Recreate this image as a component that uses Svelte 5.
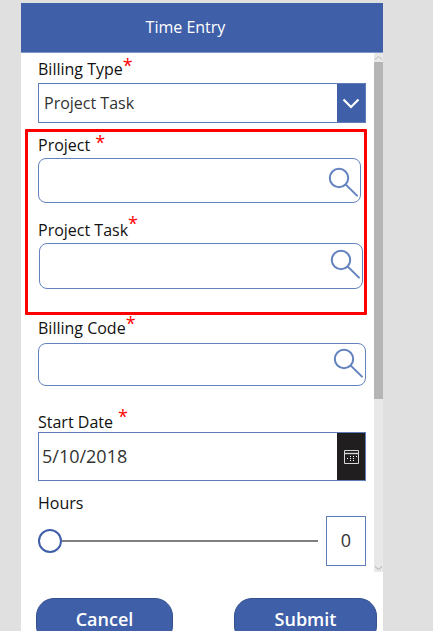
<script lang="ts">
  let hours = 0
  let startDate = '5/10/2018'
</script>

{#snippet searchIcon()}
  <svg class="search-icon" width="32" height="32" viewBox="0 0 32 32" aria-hidden="true">
    <circle cx="12" cy="12" r="9.2" fill="none" stroke="#6383bf" stroke-width="2" />
    <path d="M18.8 18.6 L30 29.6" fill="none" stroke="#6383bf" stroke-width="2" stroke-linecap="round" />
  </svg>
{/snippet}

{#snippet star()}<span class="star">*</span>{/snippet}

<div class="screen">
  <header class="title-bar">Time Entry</header>

  <div class="scroll-area">
    <form class="form">
      <div class="field">
        <div class="label label-type">Billing Type{@render star()}</div>
        <div class="select">
          <span class="select-value">Project Task</span>
          <span class="select-btn">
            <svg width="18" height="11" viewBox="0 0 18 11" aria-hidden="true">
              <path d="M1.5 1.5 L9 9 L16.5 1.5" fill="none" stroke="#fff" stroke-width="2.2" />
            </svg>
          </span>
        </div>
      </div>

      <section class="highlight">
        <div class="field">
          <div class="label label-project">Project <span class="gap"></span>{@render star()}</div>
          <div class="lookup lookup-project">{@render searchIcon()}</div>
        </div>
        <div class="field field-task">
          <div class="label label-task">Project Task{@render star()}</div>
          <div class="lookup lookup-task">{@render searchIcon()}</div>
        </div>
      </section>

      <div class="field field-code">
        <div class="label label-code">Billing Code{@render star()}</div>
        <div class="lookup lookup-code">{@render searchIcon()}</div>
      </div>

      <div class="field field-date">
        <div class="label label-date">Start Date <span class="gap"></span>{@render star()}</div>
        <div class="date">
          <span class="date-value">{startDate}</span>
          <span class="date-btn">
            <svg width="15" height="14" viewBox="0 0 15 14" aria-hidden="true">
              <path d="M.5.5h14v13H.5z" fill="none" stroke="#d8d8d8" />
              <path d="M1 3.5h13" stroke="#d8d8d8" stroke-width="1.4" />
              <path d="M6 6h1v1H6zM9 6h1v1H9zM12 6h1v1h-1zM3 8h1v1H3zM6 8h1v1H6zM9 8h1v1H9zM6 10h1v1H6zM9 10h1v1H9z" fill="#fff" />
            </svg>
          </span>
        </div>
      </div>

      <div class="field field-hours">
        <div class="label label-hours">Hours</div>
        <div class="slider-row">
          <span class="thumb"></span>
          <span class="track"></span>
          <span class="hours-box">{hours}</span>
        </div>
      </div>
    </form>

    <div class="scrollbar">
      <span class="arrow">
        <svg width="9" height="6" viewBox="0 0 9 6" aria-hidden="true"><path d="M1 4.5 L4.5 1.5 L8 4.5" fill="none" stroke="#bdbdbd" /></svg>
      </span>
      <span class="bar"></span>
      <span class="rest"></span>
      <span class="arrow">
        <svg width="9" height="6" viewBox="0 0 9 6" aria-hidden="true"><path d="M1 1.5 L4.5 4.5 L8 1.5" fill="none" stroke="#a8a8a8" /></svg>
      </span>
    </div>
  </div>

  <footer class="actions">
    <button type="button" class="btn btn-cancel">Cancel</button>
    <button type="button" class="btn btn-submit">Submit</button>
  </footer>
</div>

<style>
  :global(body) {
    background: #e0e0e0;
    height: 631px;
    overflow: hidden;
    font-family: 'Open Sans', 'Noto Sans', sans-serif;
  }

  .screen {
    width: 362px;
    height: 628px;
    margin: 3px 0 0 21px;
    background: #ffffff;
    overflow: hidden;
  }

  .title-bar {
    box-sizing: border-box;
    height: 50px;
    padding-right: 33px;
    border-bottom: 1px solid #7f96c6;
    background: #3f5fa9;
    color: #ffffff;
    font-size: 16px;
    line-height: 49px;
    text-align: center;
  }

  .scroll-area {
    display: flex;
    height: 519px;
  }

  .form {
    flex: 1;
    min-width: 0;
    padding-top: 4px;
  }

  .field {
    margin-left: 17px;
  }

  .label {
    height: 26px;
    color: #111111;
    font-size: 16px;
    line-height: 24px;
    white-space: nowrap;
  }

  .star {
    color: #ff0000;
    font-size: 18px;
    line-height: 0;
    vertical-align: 3px;
  }

  .label-project,
  .label-task,
  .label-hours {
    line-height: 26px;
  }

  .label-code {
    line-height: 22px;
  }

  .label-date {
    line-height: 32px;
  }

  .label-project .star {
    vertical-align: 2px;
  }

  .label-task .star {
    vertical-align: 6px;
  }

  .label-code .star {
    vertical-align: 4px;
  }

  .label-date .star {
    vertical-align: 5px;
  }

  .gap {
    display: inline-block;
    width: 1px;
  }

  .select,
  .date {
    box-sizing: border-box;
    display: flex;
    width: 328px;
    border: 1px solid #5f7dbb;
  }

  .select {
    height: 40px;
  }

  .select-value {
    flex: 1;
    padding-left: 5px;
    color: #333333;
    font-size: 16px;
    line-height: 38px;
  }

  .select-btn {
    display: flex;
    align-items: center;
    justify-content: center;
    width: 28px;
    background: #3f5fa9;
  }

  .highlight {
    box-sizing: border-box;
    width: 342px;
    height: 186px;
    margin: 6px 0 2px 4px;
    border: 3px solid #ff0000;
    border-radius: 1px;
  }

  .highlight .field {
    margin-left: 10px;
  }

  .highlight .field-task {
    margin: 14px 0 0 10px;
  }

  .lookup {
    box-sizing: border-box;
    display: flex;
    justify-content: flex-end;
    border: 1px solid #6383bf;
    border-radius: 8px;
    padding: 7px 1px 0 0;
  }

  .lookup-project {
    width: 323px;
    height: 45px;
  }

  .lookup-task {
    width: 324px;
    height: 46px;
    margin-left: 1px;
    padding-top: 4px;
  }

  .lookup-code {
    width: 328px;
    height: 43px;
    padding-top: 3px;
  }

  .search-icon {
    display: block;
  }

  .field-date {
    margin-top: 20px;
  }

  .date {
    height: 49px;
  }

  .date-value {
    flex: 1;
    padding-left: 3px;
    color: #333333;
    font-size: 18px;
    line-height: 47px;
  }

  .date-btn {
    display: flex;
    align-items: center;
    justify-content: center;
    width: 28px;
    background: #201e1f;
  }

  .field-hours {
    margin-top: 9px;
  }

  .slider-row {
    display: flex;
    align-items: center;
    width: 328px;
    height: 50px;
  }

  .thumb {
    box-sizing: border-box;
    flex: none;
    width: 24px;
    height: 24px;
    border: 2px solid #3f5fa9;
    border-radius: 50%;
    background: #ffffff;
  }

  .track {
    flex: 1;
    height: 2px;
    background: #7f7f7f;
  }

  .hours-box {
    box-sizing: border-box;
    flex: none;
    width: 40px;
    height: 50px;
    margin-left: 8px;
    border: 1px solid #5f7dbb;
    color: #333333;
    font-size: 18px;
    line-height: 47px;
    text-align: center;
  }

  .scrollbar {
    display: flex;
    flex: none;
    flex-direction: column;
    width: 9px;
    background: #e8e8e8;
  }

  .arrow {
    display: flex;
    flex: none;
    align-items: center;
    justify-content: center;
    height: 9px;
  }

  .bar {
    flex: none;
    height: 337px;
    background: #b5b5b5;
  }

  .rest {
    flex: 1;
  }

  .actions {
    display: flex;
    gap: 61px;
    margin-top: 26px;
    padding-left: 15px;
  }

  .btn {
    height: 46px;
    padding: 0 0 4px;
    border: 1px solid #35528f;
    border-radius: 18px;
    background: #3f5fa9;
    color: #ffffff;
    font-family: inherit;
    font-size: 18px;
    font-weight: 600;
    cursor: pointer;
  }

  .btn-cancel {
    width: 137px;
  }

  .btn-submit {
    width: 143px;
  }
</style>
